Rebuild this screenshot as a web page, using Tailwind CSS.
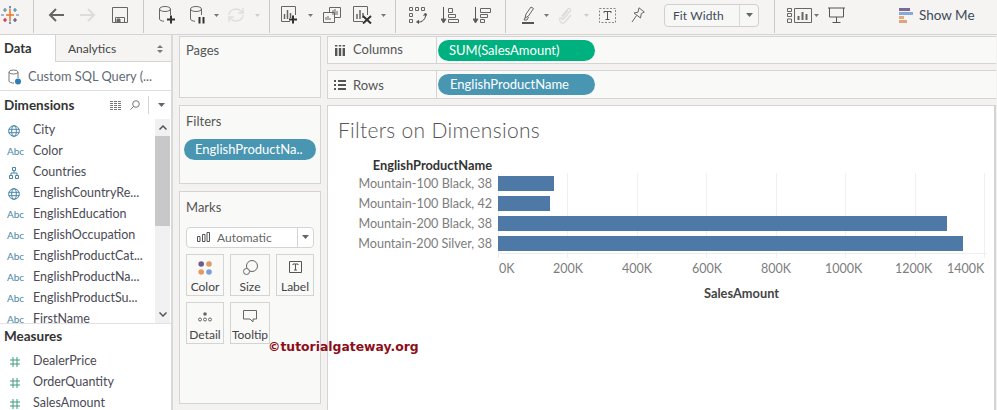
<!DOCTYPE html>
<html lang="en">

<head>
    <meta charset="UTF-8">
    <title>Filters on Dimensions</title>
    <script src="https://cdn.jsdelivr.net/npm/@tailwindcss/browser@4"></script>
</head>

<body class="relative w-[997px] h-[410px] overflow-hidden bg-[#f3f2f0] font-['Lato','Open_Sans',sans-serif] text-[13px] text-[#4f4f4f]">
    <!-- toolbar -->
    <div class="flex items-center h-[35px] pb-[4px] border-b border-[#d4d4d4] bg-[#f5f4f2]">
        <svg class="ml-px shrink-0" width="18" height="18" viewBox="0 0 18 18" fill="none" stroke-width="1.2">
            <path d="M9 3v12M5 9h8" stroke="#e8762b" stroke-width="1.5" />
            <path d="M4 2v4M2 4h4M14 2v4M12 4h4" stroke="#5b879b" />
            <path d="M4 12v4M2 14h4" stroke="#c72035" />
            <path d="M14 12v4M12 14h4" stroke="#59457e" />
            <path d="M9 0v2.500M8 1h2M9 15.500V18M8 17h2M0 9h3M15 9h3" stroke="#4e79a7" />
        </svg>
        <div class="self-start ml-[14px] w-px h-[33px] bg-[#c9c9c9]"></div>
        <svg class="ml-[14px] shrink-0" width="16" height="14" viewBox="0 0 16 14" fill="none" stroke="#666" stroke-width="2">
            <path d="M16 7H2M8 1 2 7l6 6" />
        </svg>
        <svg class="ml-4 shrink-0" width="16" height="14" viewBox="0 0 16 14" fill="none" stroke="#dcdcdc" stroke-width="2">
            <path d="M0 7h14M8 1l6 6-6 6" />
        </svg>
        <svg class="ml-4 shrink-0" width="16" height="16" viewBox="0 0 16 16" fill="none" stroke="#666">
            <path d="M.5.500h15v15H.5zM3.500 15.500v-5h9v5" />
            <path d="M5 12h3v3H5z" fill="#666" />
        </svg>
        <div class="self-start ml-[15px] w-px h-[33px] bg-[#c9c9c9]"></div>
        <svg class="ml-[15px] shrink-0" width="16" height="18" viewBox="0 0 16 18" fill="none" stroke="#666">
            <ellipse cx="6" cy="3" rx="5.500" ry="2.500" />
            <path d="M.5 3v10c0 1.200 2 2 4.500 2.300M11.500 3v6" />
            <path d="M12 9.500v8M8 13.500h8" stroke="#333" stroke-width="2" />
        </svg>
        <svg class="ml-[15px] shrink-0" width="16" height="18" viewBox="0 0 16 18" fill="none" stroke="#666">
            <ellipse cx="6" cy="3" rx="5.500" ry="2.500" />
            <path d="M.5 3v10c0 1.200 2 2 4.500 2.300M11.500 3v6" />
            <path d="M9.500 11v6.500M13.500 11v6.500" stroke="#333" stroke-width="2" />
        </svg>
        <svg class="ml-2 shrink-0" width="5" height="3" viewBox="0 0 5 3"><path d="M0 0h5L2.500 3z" fill="#777" /></svg>
        <svg class="ml-2 shrink-0" width="18" height="16" viewBox="0 0 18 16" fill="none" stroke="#dedede" stroke-width="1.500">
            <path d="M2 8a7 6.500 0 0 1 12-4l2 2M16 8a7 6.500 0 0 1-12 4l-2-2M16 1v5h-5M2 15v-5h5" />
        </svg>
        <svg class="ml-2.5 shrink-0" width="5" height="3" viewBox="0 0 5 3"><path d="M0 0h5L2.500 3z" fill="#ccc" /></svg>
        <div class="self-start ml-[9px] w-px h-[33px] bg-[#c9c9c9]"></div>
        <svg class="ml-[11px] shrink-0" width="18" height="18" viewBox="0 0 18 18" fill="none" stroke="#666">
            <path d="M9 15.500H.5V.5h14V9" />
            <path d="M3.500 13V8M6.500 13V4M9.500 12V7" stroke-width="1.500" />
            <path d="M12 9.500v8M8 13.500h8" stroke="#333" stroke-width="2" />
        </svg>
        <svg class="ml-[9px] shrink-0" width="5" height="3" viewBox="0 0 5 3"><path d="M0 0h5L2.500 3z" fill="#777" /></svg>
        <svg class="ml-2.5 shrink-0" width="18" height="16" viewBox="0 0 18 16" fill="none" stroke="#666">
            <path d="M6.500 5.500V.5h11v10H12" />
            <path d="M.5 5.500h11v10H.5z" fill="#f5f4f2" />
            <path d="M3 13v-3M5 13v-4M7 13v-2M10 8V3M12 8V2M14 8V4" />
        </svg>
        <svg class="ml-3 shrink-0" width="20" height="18" viewBox="0 0 20 18" fill="none" stroke="#666">
            <path d="M10 15.500H.5V.5h14V9" />
            <path d="M4 13V8M7 13V4M10 12V7" stroke-width="1.500" />
            <path d="m10 10 8 7.500M18 10l-8 7.500" stroke="#333" stroke-width="2" />
        </svg>
        <svg class="ml-2 shrink-0" width="5" height="3" viewBox="0 0 5 3"><path d="M0 0h5L2.500 3z" fill="#777" /></svg>
        <div class="self-start ml-[9px] w-px h-[33px] bg-[#c9c9c9]"></div>
        <svg class="ml-[13px] shrink-0" width="18" height="18" viewBox="0 0 18 18" fill="none" stroke="#666">
            <path d="M.5 1.500h3v3h-3zM6.500 1.500h3v3h-3zM12.500 1.500h3v3h-3zM.5 7.500h3v3h-3zM.5 13.500h3v3h-3z" />
            <path d="M16.500 8a7 7 0 0 1-8 8" stroke="#444" />
            <path d="m14.500 9.500 2-2.500 1.500 2.500M10 14l-2.500 2 2.500 1.500" fill="#444" />
        </svg>
        <svg class="ml-[14px] shrink-0" width="18" height="17" viewBox="0 0 18 17" fill="none" stroke="#666">
            <path d="M2.500 0v14" stroke="#555" />
            <path d="M0 12l2.500 4L5 12z" fill="#555" />
            <path d="M7.500 1.500h4v4h-4zM7.500 7.500h7v3h-7zM7.500 12.500h10v3h-10z" />
        </svg>
        <svg class="ml-[14px] shrink-0" width="18" height="17" viewBox="0 0 18 17" fill="none" stroke="#666">
            <path d="M2.500 0v14" stroke="#555" />
            <path d="M0 12l2.500 4L5 12z" fill="#555" />
            <path d="M7.500 1.500h10v4h-10zM7.500 7.500h7v3h-7zM7.500 12.500h4v3h-4z" />
        </svg>
        <div class="self-start ml-[14px] w-px h-[33px] bg-[#c9c9c9]"></div>
        <svg class="ml-4 shrink-0" width="12" height="18" viewBox="0 0 12 18" fill="none" stroke="#666">
            <path d="m3 12 1-4 5-7 2.500 1.500-5 7.500z" />
            <path d="m3 12-1 2h3l1.500-3" />
            <path d="M0 17h12" stroke="#555" stroke-width="2" />
        </svg>
        <svg class="ml-2.5 shrink-0" width="5" height="3" viewBox="0 0 5 3"><path d="M0 0h5L2.500 3z" fill="#777" /></svg>
        <svg class="ml-2.5 shrink-0" width="13" height="17" viewBox="0 0 13 17" fill="none" stroke="#dcdcdc" stroke-width="1.300">
            <path d="M3 9 9 2c1.500-1.500 3.500.5 2.200 2L4.500 12c-1 1.200-2.500 0-1.500-1.300l6-7M1 10l-.2 3c0 3 3.500 4 5.200 2l6-7" />
        </svg>
        <svg class="ml-3 shrink-0" width="5" height="3" viewBox="0 0 5 3"><path d="M0 0h5L2.500 3z" fill="#ccc" /></svg>
        <svg class="ml-2.5 shrink-0" width="17" height="15" viewBox="0 0 17 15" fill="none">
            <path d="M.5.500h16v14H.5z" stroke="#888" stroke-dasharray="2 1.500" />
            <path d="M5 5V3.500h7V5M8.500 3.500v8M6.500 11.500h4" stroke="#555" />
        </svg>
        <svg class="ml-[15px] shrink-0" width="14" height="17" viewBox="0 0 14 17" fill="none" stroke="#666">
            <path d="M8 .8 13.300 5l-3 1.500-.8 4.500L3 6l4-.8zM5.500 8.500 1 15" />
        </svg>
        <div class="ml-[19px] flex w-[95px] h-[23px] shrink-0 items-center rounded-sm border border-[#cfcfcf] bg-[#f7f7f6] text-[12px] tracking-[.1px] text-[#3c4a5a]">
            <span class="w-[75px] pl-2 border-r border-[#d8d8d8] leading-[21px]">Fit Width</span>
            <svg class="ml-[6px]" width="7" height="4" viewBox="0 0 7 4"><path d="M0 0h7L3.500 4z" fill="#666" /></svg>
        </div>
        <div class="self-start ml-[15px] w-px h-[33px] bg-[#c9c9c9]"></div>
        <svg class="ml-3 shrink-0" width="25" height="15" viewBox="0 0 25 15" fill="none" stroke="#666">
            <path d="M.5.500h4v3h-4zM.5 5.500h4v3h-4zM.5 11h4v3.500h-4zM7.500.500h17v14h-17z" />
            <path d="M11.500 12V8M15.500 12V4M19.500 12V6" stroke-width="2" />
        </svg>
        <svg class="ml-0.5 shrink-0" width="5" height="3" viewBox="0 0 5 3"><path d="M0 0h5L2.500 3z" fill="#777" /></svg>
        <svg class="ml-[9px] shrink-0" width="17" height="16" viewBox="0 0 17 16" fill="none" stroke="#555">
            <path d="M0 1h17M1.500 1v9h14V1M8.500 10v5M4.500 15.500h8" />
        </svg>
        <svg class="ml-[54px] shrink-0" width="14" height="15" viewBox="0 0 14 15">
            <path d="M0 0h11v3H0z" fill="#7b6a96" />
            <path d="M0 4h14v3H0z" fill="#88a8d8" />
            <path d="M0 8h5v3H0z" fill="#e8a87c" />
            <path d="M0 12h8v3H0z" fill="#e0a37a" />
        </svg>
        <span class="ml-[6px] text-[13.5px] text-[#3c4a5a]">Show Me</span>
    </div>

    <div class="flex h-[375px]">
        <!-- data pane -->
        <aside class="flex flex-col w-[173px] shrink-0 border-r-2 border-[#d9d9d9] bg-white">
            <div class="flex h-[27px] shrink-0">
                <div class="w-[55px] pl-1 leading-[26px] font-bold text-[13px] text-[#333]">Data</div>
                <div class="flex flex-1 items-center justify-between pl-3 pr-2 pt-px border-l border-b border-[#d4d4d4] bg-[#f5f4f2] text-[12px] text-[#444]">
                    <span>Analytics</span>
                    <svg width="6" height="8" viewBox="0 0 6 8"><path d="M0 3h6L3 0zM0 5h6L3 8z" fill="#777" /></svg>
                </div>
            </div>
            <div class="flex items-center h-[29px] shrink-0 pl-2 pt-px gap-[6px] border-b border-[#dedede] text-[12.8px] text-[#5f6a74]">
                <svg width="14" height="16" viewBox="0 0 14 16" fill="none">
                    <ellipse cx="5.500" cy="3" rx="4.500" ry="2" stroke="#777" />
                    <path d="M1 3v9c0 1.500 3 2.200 5 2M10 3v6" stroke="#777" />
                    <circle cx="10" cy="12.500" r="3" fill="#2e7db5" />
                </svg>
                <span>Custom SQL Query (...</span>
            </div>
            <div class="flex items-center h-[28px] shrink-0 pl-1 pr-[6px]">
                <span class="flex-1 font-bold text-[13.5px] text-[#333]">Dimensions</span>
                <svg width="12" height="9" viewBox="0 0 12 9" fill="none" stroke="#777"><path d="M0 .5h12M0 2.500h12M0 4.500h12M0 6.500h12M0 8.500h12" stroke-dasharray="3 1" /></svg>
                <svg class="ml-2" width="10" height="10" viewBox="0 0 10 10" fill="none" stroke="#777"><circle cx="6" cy="4" r="3.300" /><path d="M3.500 6.500 .5 9.500" /></svg>
                <div class="ml-2 w-px h-[18px] bg-[#d4d4d4]"></div>
                <svg class="ml-[9px]" width="7" height="4" viewBox="0 0 7 4"><path d="M0 0h7L3.500 4z" fill="#666" /></svg>
            </div>
            <div class="flex h-[205px] shrink-0 overflow-hidden border-b border-[#e2e2e2]">
                <ul class="flex-1 pt-px text-[12.5px] text-[#4b4b55]">
                    <li class="flex items-center h-[21px]">
                        <svg class="ml-2 mr-[13px]" width="12" height="12" viewBox="0 0 12 12" fill="none" stroke="#4a86a8"><circle cx="6" cy="6" r="5.300" /><ellipse cx="6" cy="6" rx="2.300" ry="5.300" /><path d="M.7 4.300h10.600M.7 7.700h10.600" /></svg>City
                    </li>
                    <li class="flex items-center h-[21px]"><span class="w-[33px] pl-[7px] text-[10px] text-[#4a86a8]">Abc</span>Color</li>
                    <li class="flex items-center h-[21px]">
                        <svg class="ml-[9px] mr-[14px]" width="10" height="12" viewBox="0 0 10 12" fill="none" stroke="#4a86a8"><path d="M3.500.5h3v3h-3zM.5 8.500h3v3h-3zM6.500 8.500h3v3h-3zM5 3.500V6M2 8.500V6h6v2.500" /></svg>Countries
                    </li>
                    <li class="flex items-center h-[21px]">
                        <svg class="ml-2 mr-[13px]" width="12" height="12" viewBox="0 0 12 12" fill="none" stroke="#4a86a8"><circle cx="6" cy="6" r="5.300" /><ellipse cx="6" cy="6" rx="2.300" ry="5.300" /><path d="M.7 4.300h10.600M.7 7.700h10.600" /></svg>EnglishCountryRe...
                    </li>
                    <li class="flex items-center h-[21px]"><span class="w-[33px] pl-[7px] text-[10px] text-[#4a86a8]">Abc</span>EnglishEducation</li>
                    <li class="flex items-center h-[21px]"><span class="w-[33px] pl-[7px] text-[10px] text-[#4a86a8]">Abc</span>EnglishOccupation</li>
                    <li class="flex items-center h-[21px]"><span class="w-[33px] pl-[7px] text-[10px] text-[#4a86a8]">Abc</span>EnglishProductCat...</li>
                    <li class="flex items-center h-[21px]"><span class="w-[33px] pl-[7px] text-[10px] text-[#4a86a8]">Abc</span>EnglishProductNa...</li>
                    <li class="flex items-center h-[21px]"><span class="w-[33px] pl-[7px] text-[10px] text-[#4a86a8]">Abc</span>EnglishProductSu...</li>
                    <li class="flex items-center h-[21px]"><span class="w-[33px] pl-[7px] text-[10px] text-[#4a86a8]">Abc</span>FirstName</li>
                </ul>
                <div class="flex flex-col w-[15px] mr-px shrink-0 bg-[#f1f1f1]">
                    <div class="flex items-center justify-center h-[17px]">
                        <svg width="8" height="5" viewBox="0 0 8 5" fill="none" stroke="#555" stroke-width="1.500"><path d="m.5 4.500 3.500-3.500 3.500 3.500" /></svg>
                    </div>
                    <div class="h-[90px] bg-[#c8c8c8]"></div>
                    <div class="flex-1"></div>
                    <div class="flex items-center justify-center h-[17px]">
                        <svg width="8" height="5" viewBox="0 0 8 5" fill="none" stroke="#555" stroke-width="1.500"><path d="m.5.500 3.500 3.500 3.500-3.500" /></svg>
                    </div>
                </div>
            </div>
            <div class="h-[24px] shrink-0 pl-1 leading-[24px] font-bold text-[13.5px] text-[#333]">Measures</div>
            <ul class="pt-[3px] text-[12.5px] text-[#4b4b55]">
                <li class="flex items-center h-[21px]">
                    <svg class="ml-[10px] mr-[13px]" width="10" height="10" viewBox="0 0 10 10" fill="none" stroke="#3e9e78"><path d="M3 0v10M7 0v10M0 3h10M0 7h10" /></svg>DealerPrice
                </li>
                <li class="flex items-center h-[21px]">
                    <svg class="ml-[10px] mr-[13px]" width="10" height="10" viewBox="0 0 10 10" fill="none" stroke="#3e9e78"><path d="M3 0v10M7 0v10M0 3h10M0 7h10" /></svg>OrderQuantity
                </li>
                <li class="flex items-center h-[21px]">
                    <svg class="ml-[10px] mr-[13px]" width="10" height="10" viewBox="0 0 10 10" fill="none" stroke="#3e9e78"><path d="M3 0v10M7 0v10M0 3h10M0 7h10" /></svg>SalesAmount
                </li>
            </ul>
        </aside>

        <!-- pages, filters, marks -->
        <div class="flex flex-col w-[142px] ml-[6px] mt-px shrink-0 gap-[7px] text-[#555]">
            <div class="h-[62px] pl-[6px] pt-[4px] border border-[#d4d4d4] bg-[#f9f9f8]">Pages</div>
            <div class="h-[79px] pt-[6px] border border-[#d4d4d4] bg-[#f9f9f8]">
                <div class="pl-[6px]">Filters</div>
                <div class="mt-[7px] ml-[4px] w-[132px] h-[21px] rounded-full bg-[#4996b2] pl-[11px] leading-[21px] text-white">EnglishProductNa..</div>
            </div>
            <div class="h-[213px] px-[6px] pt-[6px] border border-[#d4d4d4] bg-[#f9f9f8]">
                <div>Marks</div>
                <div class="flex items-center mt-[9px] w-[128px] h-[21px] rounded-sm border border-[#d4d4d4] bg-white text-[12px] text-[#666]">
                    <svg class="ml-[10px] mr-[7px]" width="13" height="10" viewBox="0 0 13 10" fill="none" stroke="#555"><path d="M.5 4.500h2.500v5H.5zM5.500 2.500H8v7H5.500zM10 .5h2.500v9H10z" /></svg>
                    <span class="w-[80px] pt-px">Automatic</span>
                    <div class="flex items-center justify-center flex-1 h-full border-l border-[#d4d4d4]">
                        <svg width="7" height="4" viewBox="0 0 7 4"><path d="M0 0h7L3.500 4z" fill="#666" /></svg>
                    </div>
                </div>
                <div class="flex gap-[6px] mt-[6px] text-[12px] leading-[14px] text-[#444]">
                    <div class="flex flex-col items-center w-[38px] h-[42px] border border-[#d4d4d4] pt-[6px]">
                        <svg class="shrink-0" width="14" height="14" viewBox="0 0 14 14"><circle cx="3.200" cy="3" r="2.800" fill="#6f5a8e" /><circle cx="11" cy="3" r="2.800" fill="#e29a62" /><circle cx="3.200" cy="11" r="2.800" fill="#e29a62" /><circle cx="11" cy="11" r="2.800" fill="#7b9fd8" /></svg>
                        <span class="mt-[5px]">Color</span>
                    </div>
                    <div class="flex flex-col items-center w-[40px] h-[42px] border border-[#d4d4d4] pt-[5px]">
                        <svg class="shrink-0" width="15" height="15" viewBox="0 0 15 15" fill="none" stroke="#666"><circle cx="9" cy="6" r="5.500" /><circle cx="3.500" cy="11.500" r="3" fill="#f9f9f8" /></svg>
                        <span class="mt-[5px]">Size</span>
                    </div>
                    <div class="flex flex-col items-center w-[38px] h-[42px] border border-[#d4d4d4] pt-[6px]">
                        <svg class="shrink-0" width="13" height="12" viewBox="0 0 13 12" fill="none" stroke="#555"><path d="M.5.500h12v11H.5zM4 4V3h5v1M6.500 3v6M5 9h3" /></svg>
                        <span class="mt-[7px]">Label</span>
                    </div>
                </div>
                <div class="flex gap-[6px] mt-[6px] text-[12px] leading-[14px] text-[#444]">
                    <div class="flex flex-col items-center w-[38px] h-[42px] border border-[#d4d4d4] pt-[9px]">
                        <svg class="shrink-0" width="14" height="10" viewBox="0 0 14 10" fill="none" stroke="#666"><circle cx="7" cy="2" r="1.800" fill="#666" stroke="none" /><circle cx="2" cy="7.500" r="1.500" /><circle cx="7" cy="7.500" r="1.500" /><circle cx="12" cy="7.500" r="1.500" /></svg>
                        <span class="mt-[6px]">Detail</span>
                    </div>
                    <div class="flex flex-col items-center w-[40px] h-[42px] border border-[#d4d4d4] pt-[7px]">
                        <svg class="shrink-0" width="14" height="13" viewBox="0 0 14 13" fill="none" stroke="#666"><path d="M.5.500h13v8.500h-3.500v3l-3-3H.5z" /></svg>
                        <span class="mt-[5px]">Tooltip</span>
                    </div>
                </div>
            </div>
        </div>

        <!-- shelves and view -->
        <div class="flex flex-col w-[669px] ml-[6px] mt-px gap-[6px]">
            <div class="flex items-center h-[28px] border border-r-0 border-[#d4d4d4] bg-[#f9f9f8] text-[#555]">
                <svg class="ml-[7px] mr-[8px]" width="10" height="11" viewBox="0 0 10 11" fill="#555"><path d="M0 3h2.400v8H0zM3.800 3h2.400v8H3.800zM7.600 3H10v8H7.600zM0 0h2.400v1.600H0zM3.800 0h2.400v1.600H3.800zM7.600 0H10v1.600H7.600z" /></svg>
                <span class="w-[84px] h-full leading-[25px] border-r border-[#d4d4d4]">Columns</span>
                <div class="ml-[1px] w-[157px] h-[21px] rounded-full bg-[#00b180] pl-[11px] leading-[21px] text-white">SUM(SalesAmount)</div>
            </div>
            <div class="flex items-center h-[29px] border border-r-0 border-[#d4d4d4] bg-[#f9f9f8] text-[#555]">
                <svg class="ml-[6px] mr-[7px]" width="12" height="10" viewBox="0 0 12 10" fill="#555"><path d="M0 0h2v2H0zM4 0h8v2H4zM0 4h2v2H0zM4 4h8v2H4zM0 8h2v2H0zM4 8h8v2H4z" /></svg>
                <span class="w-[84px] h-full leading-[28px] border-r border-[#d4d4d4]">Rows</span>
                <div class="ml-[1px] w-[157px] h-[21px] rounded-full bg-[#4996b2] pl-[12px] leading-[21px] text-white">EnglishProductName</div>
            </div>
            <div class="relative flex-1 border-t border-l border-r-2 border-[#d4d4d4] bg-white">
                <h1 class="pl-[10px] pt-[10px] text-[21px] font-light tracking-[.3px] leading-[28px] text-[#555]">Filters on Dimensions</h1>
                <!-- chart canvas, plot origin at x=498 -->
                <div class="absolute left-0 top-[50px] w-full">
                    <div class="w-[164px] text-right text-[12.8px] font-bold leading-[18px] text-[#333]">EnglishProductName</div>
                    <div class="flex">
                        <div class="w-[164px] text-right text-[12.6px] leading-[20px] text-[#7d7d7d]">
                            <div>Mountain-100 Black, 38</div>
                            <div>Mountain-100 Black, 42</div>
                            <div>Mountain-200 Black, 38</div>
                            <div>Mountain-200 Silver, 38</div>
                        </div>
                        <div class="relative ml-[6px] w-[489px] h-[80px] pt-[2px] border-b border-[#eeeeee]">
                            <div class="absolute top-[-1px] bottom-[-5px] left-0 w-px bg-[#eeeeee]"></div>
                            <div class="absolute top-[-1px] bottom-[-5px] left-[69px] w-px bg-[#f0f0f0]"></div>
                            <div class="absolute top-[-1px] bottom-[-5px] left-[139px] w-px bg-[#f0f0f0]"></div>
                            <div class="absolute top-[-1px] bottom-[-5px] left-[208px] w-px bg-[#f0f0f0]"></div>
                            <div class="absolute top-[-1px] bottom-[-5px] left-[278px] w-px bg-[#f0f0f0]"></div>
                            <div class="absolute top-[-1px] bottom-[-5px] left-[347px] w-px bg-[#f0f0f0]"></div>
                            <div class="absolute top-[-1px] bottom-[-5px] left-[417px] w-px bg-[#f0f0f0]"></div>
                            <div class="absolute top-[-1px] bottom-[-5px] left-[486px] w-px bg-[#f0f0f0]"></div>
                            <div class="relative flex flex-col gap-[5px]">
                                <div class="w-[56px] h-[15px] bg-[#4e79a7]"></div>
                                <div class="w-[52px] h-[15px] bg-[#4e79a7]"></div>
                                <div class="w-[449px] h-[15px] bg-[#4e79a7]"></div>
                                <div class="w-[465px] h-[15px] bg-[#4e79a7]"></div>
                            </div>
                        </div>
                    </div>
                    <div class="flex mt-[7px] ml-[170px] text-[12.5px] leading-[16px] text-[#7d7d7d]">
                        <span class="w-[50px] pl-[1px]">0K</span>
                        <span class="w-[70px] pl-[5px]">200K</span>
                        <span class="w-[70px] pl-[4px]">400K</span>
                        <span class="w-[69px] pl-[4px]">600K</span>
                        <span class="w-[68px] pl-[4px]">800K</span>
                        <span class="w-[70px]">1000K</span>
                        <span class="w-[52px]">1200K</span>
                        <span>1400K</span>
                    </div>
                    <div class="mt-[8px] ml-[376px] text-[12.8px] font-bold leading-[16px] text-[#444]">SalesAmount</div>
                </div>
            </div>
        </div>
    </div>

    <!-- watermark sits over the panes -->
    <div class="absolute left-[268px] top-[339px] font-['DejaVu_Sans',sans-serif] text-[12.4px] font-bold leading-[16px] text-[#8b0f1a]">©tutorialgateway.org</div>
</body>

</html>
